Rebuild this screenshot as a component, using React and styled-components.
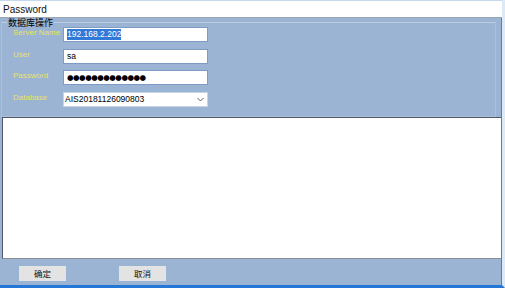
import styled, { createGlobalStyle } from "styled-components";

const GlobalStyle = createGlobalStyle`
  html, body {
    margin: 0;
    padding: 0;
    overflow: hidden;
    background: #ffffff;
  }
`;

const Window = styled.div`
  width: 505px;
  height: 288px;
  box-sizing: border-box;
  display: flex;
  flex-direction: column;
  border-right: 3px solid #dce9f6;
  border-bottom: 3px solid #2477d6;
  font-family: "Liberation Sans", Arial, sans-serif;
  background: #9bb4d3;
`;

const TitleBar = styled.div`
  flex: none;
  height: 18px;
  box-sizing: border-box;
  display: flex;
  align-items: center;
  padding-left: 3px;
  background: #ffffff;
  border-top: 1px solid #c6d8ec;
  border-bottom: 1px solid #9aa5b3;
  font-size: 10px;
  color: #111;
`;

const Body = styled.div`
  flex: 1;
  display: flex;
  flex-direction: column;
  border-right: 1px solid #6e7a88;
  min-height: 0;
`;

const GroupBox = styled.fieldset`
  flex: none;
  height: 99px;
  box-sizing: border-box;
  margin: 0 5px 0 1px;
  padding: 0 0 0 11px;
  border: 1px solid #adc0d9;
  border-top-color: #bccde2;
  min-width: 0;
`;

const Legend = styled.legend`
  margin-left: -6px;
  padding: 0 1px;
  font-family: "Noto Sans CJK SC", sans-serif;
  font-size: 9px;
  line-height: 9px;
  color: #000;
`;

const Form = styled.div`
  display: grid;
  grid-template-columns: 50px 145px;
  grid-auto-rows: 15px;
  row-gap: 6.5px;
`;

const Label = styled.div`
  font-size: 8px;
  line-height: 10px;
  padding-top: 1px;
  color: #e6e652;
`;

const Field = styled.div`
  box-sizing: border-box;
  height: 15px;
  display: flex;
  align-items: center;
  justify-content: space-between;
  padding: 0 3px 0 ${(p) => (p.$combo ? "1px" : "3px")};
  background: #ffffff;
  border: 1px solid ${(p) => (p.$combo ? "#c9d4e2" : "#7d9bc3")};
  font-size: 8.5px;
  color: #000;
  white-space: nowrap;
  overflow: hidden;
`;

const Selected = styled.span`
  background: #3079d8;
  color: #ffffff;
  line-height: 11px;
`;

const Dots = styled.span`
  font-family: "DejaVu Sans", sans-serif;
  font-size: 7.5px;
  letter-spacing: -0.5px;
`;

const Chevron = () => (
  <svg width="7" height="5" viewBox="0 0 7 5">
    <path d="M0.5 1 L3.5 4 L6.5 1" fill="none" stroke="#606060" strokeWidth="1" />
  </svg>
);

const Output = styled.div`
  flex: 1;
  margin-left: 2px;
  background: #ffffff;
  border-top: 1px solid #4f5965;
  border-left: 1px solid #4f5965;
  border-bottom: 1px solid #8a8f96;
`;

const ButtonBar = styled.div`
  flex: none;
  height: 26px;
  box-sizing: border-box;
  display: flex;
  align-items: center;
  gap: 53px;
  padding: 2px 0 0 19px;
`;

const Button = styled.div`
  width: 47px;
  height: 15px;
  display: flex;
  align-items: center;
  justify-content: center;
  background: #e3e3e3;
  font-family: "Noto Sans CJK SC", sans-serif;
  font-size: 8.5px;
  color: #111;
`;

const App = () => {
  return (
    <>
      <GlobalStyle />
      <Window>
        <TitleBar>Password</TitleBar>
        <Body>
          <GroupBox>
            <Legend>数据库操作</Legend>
            <Form>
              <Label>Server Name</Label>
              <Field>
                <Selected>192.168.2.202</Selected>
              </Field>
              <Label>User</Label>
              <Field>sa</Field>
              <Label>Password</Label>
              <Field>
                <Dots>●●●●●●●●●●●●●</Dots>
              </Field>
              <Label>Database</Label>
              <Field $combo>
                AIS20181126090803
                <Chevron />
              </Field>
            </Form>
          </GroupBox>
          <Output />
          <ButtonBar>
            <Button>确定</Button>
            <Button>取消</Button>
          </ButtonBar>
        </Body>
      </Window>
    </>
  );
};

export default App;
